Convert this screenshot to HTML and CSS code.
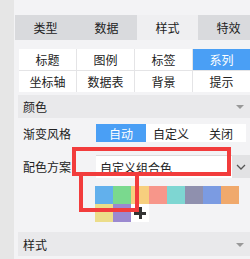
FILE: index.html
```html
<!DOCTYPE html>
<html lang="zh">
<head>
    <meta charset="UTF-8">
    <title>样式</title>
    <link rel="stylesheet" href="styles.css">
</head>
<body>
    <div class="side"></div>
    <div class="panel">
        <div class="tabs">
            <div class="tab">类型</div>
            <div class="tab">数据</div>
            <div class="tab active">样式</div>
            <div class="tab">特效</div>
        </div>

        <div class="subtabs">
            <div class="sub">标题</div>
            <div class="sub">图例</div>
            <div class="sub">标签</div>
            <div class="sub on">系列</div>
            <div class="sub">坐标轴</div>
            <div class="sub">数据表</div>
            <div class="sub">背景</div>
            <div class="sub">提示</div>
        </div>

        <div class="section-head">颜色<span class="caret"></span></div>

        <div class="row">
            <div class="label">渐变风格</div>
            <div class="seg">
                <div class="seg-btn on">自动</div>
                <div class="seg-btn">自定义</div>
                <div class="seg-btn">关闭</div>
            </div>
        </div>

        <div class="row row-select">
            <div class="label">配色方案</div>
            <div class="select">
                <div class="select-text">自定义组合色</div>
                <div class="select-arrow">
                    <svg width="10" height="6" viewBox="0 0 10 6"><path d="M1 1 L5 5 L9 1" fill="none" stroke="#555" stroke-width="1.3"/></svg>
                </div>
            </div>
        </div>

        <div class="swatches">
            <span class="sw" style="background:#62b0ec"></span>
            <span class="sw" style="background:#7ad98e"></span>
            <span class="sw" style="background:#f7cf7e"></span>
            <span class="sw" style="background:#f7968a"></span>
            <span class="sw" style="background:#7ed6d2"></span>
            <span class="sw" style="background:#8f90ae"></span>
            <span class="sw" style="background:#7b9be2"></span>
            <span class="sw" style="background:#f0a96c"></span>
            <span class="sw" style="background:#ecdd8a"></span>
            <span class="sw" style="background:#9b89d0"></span>
            <span class="sw add"></span>
        </div>

        <div class="section-head style-head">样式<span class="caret"></span></div>
    </div>

    <!-- annotation boxes -->
    <div class="mark mark-select"></div>
    <div class="mark mark-swatch"></div>
</body>
</html>
```

FILE: styles.css
```css
body {
    margin: 0;
    width: 250px;
    height: 259px;
    overflow: hidden;
    display: flex;
    background-color: #f3f3f5;
    font-family: "Noto Sans CJK SC", "Liberation Sans", sans-serif;
    font-size: 12px;
    color: #222;
    position: relative;
}
.side {
    width: 14px;
    flex-shrink: 0;
    background-color: #e6e6e6;
}
.panel {
    flex: 1;
    padding-top: 15px;
    min-width: 0;
}
.tabs {
    display: grid;
    grid-template-columns: repeat(4, 61px);
    height: 25px;
    margin-left: 1px;
}
.tab {
    background-color: #d9dadd;
    display: flex;
    align-items: center;
    justify-content: center;
}
.tab.active {
    background-color: #efeff1;
}
.subtabs {
    display: grid;
    grid-template-columns: repeat(4, 57px);
    grid-auto-rows: 21px;
    gap: 1px;
    margin: 9px 0 0 5px;
    background-color: #e4e4e6;
    width: 232px;
}
.sub {
    background-color: #fff;
    display: flex;
    align-items: center;
    justify-content: center;
}
.sub.on {
    background-color: #4a9ff5;
    color: #fff;
}
.section-head {
    margin: 3px 0 0 4px;
    height: 23px;
    background-color: #e9e9eb;
    display: flex;
    align-items: center;
    padding-left: 5px;
    position: relative;
}
.caret {
    position: absolute;
    right: 6px;
    top: 10px;
    width: 0;
    height: 0;
    border-left: 4px solid transparent;
    border-right: 4px solid transparent;
    border-top: 4px solid #999;
}
.row {
    display: flex;
    align-items: center;
    margin: 6px 0 0 9px;
    height: 18px;
}
.label {
    width: 73px;
}
.seg {
    display: flex;
    background-color: #fff;
}
.seg-btn {
    width: 50px;
    height: 18px;
    display: flex;
    align-items: center;
    justify-content: center;
}
.seg-btn.on {
    background-color: #4a9ff5;
    color: #fff;
}
.row-select {
    margin-top: 13px;
    height: 23px;
}
.select {
    display: flex;
    height: 23px;
    flex: 1;
}
.select-text {
    flex: 1;
    background-color: #fff;
    border-top: 1px solid #dcdcdc;
    display: flex;
    align-items: center;
    padding-left: 4px;
}
.select-arrow {
    width: 18px;
    background-color: #e2e2e4;
    display: flex;
    align-items: center;
    justify-content: center;
}
.swatches {
    display: grid;
    grid-template-columns: repeat(8, 18px);
    grid-auto-rows: 18px;
    margin: 8px 0 0 81px;
}
.sw {
    display: block;
}
.sw.add {
    background-color: #fff;
    position: relative;
}
.sw.add::before,
.sw.add::after {
    content: "";
    position: absolute;
    background-color: #333;
}
.sw.add::before {
    left: 3px;
    top: 8px;
    width: 12px;
    height: 3px;
}
.sw.add::after {
    left: 8px;
    top: 3px;
    width: 3px;
    height: 12px;
}
.style-head {
    margin-top: 10px;
    height: 24px;
}
.style-head .caret {
    top: 11px;
}
.mark {
    position: absolute;
    border: 4px solid #f23c3c;
    box-sizing: border-box;
}
.mark-select {
    left: 72px;
    top: 147px;
    width: 159px;
    height: 29px;
}
.mark-swatch {
    left: 79px;
    top: 172px;
    width: 60px;
    height: 40px;
}
```
